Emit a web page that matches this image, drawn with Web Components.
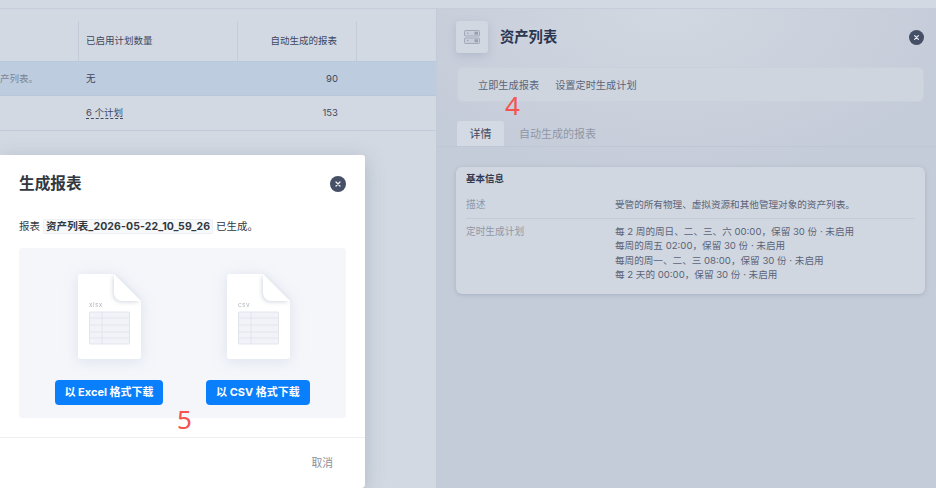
<!doctype html>
<html lang="zh">
<head>
<meta charset="utf-8">
<title>资产列表</title>
<style>
  html, body { margin: 0; height: 100%; overflow: hidden; }
  body {
    position: relative;
    width: 936px;
    height: 488px;
    background: #d3d9e2;
    color: #3d4760;
    font: 9.5px/14px Inter, "Noto Sans CJK SC", sans-serif;
  }
  .main { display: flex; height: 480px; border-top: 1px solid #c6cedc; margin-top: 8px; box-sizing: border-box; }
</style>
</head>
<body>
<div class="main">
  <report-table></report-table>
  <asset-panel></asset-panel>
</div>
<report-modal></report-modal>
<step-mark style="left:505px;top:95px">4</step-mark>
<step-mark style="left:177px;top:409px">5</step-mark>

<script>
const closeButton = size => `
  <svg width="${size}" height="${size}" viewBox="0 0 16 16">
    <circle cx="8" cy="8" r="8" fill="#454f65"/>
    <path d="M6 6l4 4M10 6l-4 4" stroke="#eef0f4" stroke-width="1.3" stroke-linecap="round"/>
  </svg>`

class ReportTable extends HTMLElement {
  constructor() {
    super()
    this.attachShadow({mode: 'open'}).innerHTML = `
      <style>
        :host { display: block; width: 437px; flex: none; box-sizing: border-box; padding-top: 12px; border-right: 1px solid #c3cbda; }
        .row { display: grid; grid-template-columns: 79px 159px 119px 1fr; align-items: center; border-bottom: 1px solid #c0cbdc; }
        .head { height: 41px; border-bottom: 1px solid #b7c8dd; box-sizing: border-box; }
        .head > div { height: 100%; display: flex; align-items: center; border-right: 1px solid #c5ccd9; box-sizing: border-box; }
        .head > div:last-child { border: 0; }
        .r1 { height: 34px; background: #bdcddf; box-sizing: border-box; border-bottom-color: #b7c8dd; }
        .r2 { height: 35px; box-sizing: border-box; }
        .cell { padding-left: 7px; }
        .num { padding: 0 19px 0 0; text-align: right; justify-content: flex-end; }
        .clip { color: #7d8595; white-space: nowrap; display: flex; justify-content: flex-end; overflow: hidden; padding-right: 41px; }
        .plans { border-bottom: 1px dashed #3f4a60; }
      </style>
      <div class="row head">
        <div></div><div class="cell">已启用计划数量</div><div class="num">自动生成的报表</div><div></div>
      </div>
      <div class="row r1">
        <div class="clip"><span>资产列表。</span></div><div class="cell">无</div><div class="num">90</div><div></div>
      </div>
      <div class="row r2">
        <div></div><div class="cell"><span class="plans">6 个计划</span></div><div class="num">153</div><div></div>
      </div>`
  }
}
customElements.define('report-table', ReportTable)

class AssetPanel extends HTMLElement {
  constructor() {
    super()
    this.attachShadow({mode: 'open'}).innerHTML = `
      <style>
        :host {
          display: block; flex: 1; box-sizing: border-box; padding: 12px 11px 0 19px;
          background: radial-gradient(ellipse 300px 170px at 230px 0, #d2d8e1, #c5ccd9);
        }
        .top { display: flex; align-items: center; height: 32px; }
        .logo {
          width: 32px; height: 32px; border-radius: 3px; background: #d2d8e1;
          box-shadow: 0 3px 8px rgba(100,115,145,.22);
          display: flex; align-items: center; justify-content: center;
        }
        h1 { margin: 0 0 0 12px; font-size: 14.3px; font-weight: 700; color: #2a3550; flex: 1; }
        .close { display: flex; margin-right: 1px; }
        .actions {
          display: flex; gap: 16px; align-items: center; height: 35px; box-sizing: border-box;
          margin: 14px 1px 0 1px; padding-left: 21px; border-radius: 6px;
          background: #ced5df; box-shadow: inset 0 0 0 1px #c9d1dd; color: #5a647a; font-size: 10.2px;
        }
        .tabs { display: flex; margin-top: 19px; margin-left: -19px; margin-right: -11px; padding-left: 20px; height: 26px; border-bottom: 1px solid #bfc7d6; box-sizing: border-box; }
        .tab { display: flex; align-items: center; font-size: 11px; }
        .on { width: 47px; justify-content: center; background: #d4dae3; border-radius: 3px 3px 0 0; color: #3d4760; }
        .off { margin-left: 15px; color: #8f97a7; }
        .card {
          margin-top: 20px; height: 127px; box-sizing: border-box; width: 469px;
          padding: 5px 10px 0; border-radius: 6px; background: #d1d7e0;
          box-shadow: 0 1px 4px rgba(110,125,155,.35);
        }
        h2 { margin: 0; font-size: 9.5px; line-height: 14px; font-weight: 700; color: #2f3a52; }
        .field { display: grid; grid-template-columns: 149px 1fr; color: #5a647a; font-size: 9.6px; }
        .field .k { color: #8f97a7; font-size: 9.7px; }
        .d { margin-top: 12px; padding-bottom: 6px; border-bottom: 1px solid #c3ccdb; }
        .s { margin-top: 6px; line-height: 14.3px; }
      </style>
      <div class="top">
        <div class="logo">
          <svg width="16" height="14" viewBox="0 0 16 14" fill="none" stroke="#a2aab8">
            <rect x=".5" y=".5" width="15" height="5.5" rx=".8" fill="#c8cfda"/>
            <rect x=".5" y="8" width="15" height="5.5" rx=".8" fill="#c8cfda"/>
            <path d="M10.5 3.2h3.5M10.5 10.7h3.5" stroke="#98a0af" stroke-width="3"/>
            <path d="M3 3.2h1.5M3 10.7h1.5" stroke="#98a0af"/>
          </svg>
        </div>
        <h1>资产列表</h1>
        <span class="close">${closeButton(15)}</span>
      </div>
      <div class="actions"><span>立即生成报表</span><span>设置定时生成计划</span></div>
      <div class="tabs">
        <span class="tab on">详情</span>
        <span class="tab off">自动生成的报表</span>
      </div>
      <div class="card">
        <h2>基本信息</h2>
        <div class="field d"><span class="k">描述</span><span>受管的所有物理、虚拟资源和其他管理对象的资产列表。</span></div>
        <div class="field s"><span class="k">定时生成计划</span><span>每 2 周的周日、二、三、六 00:00，保留 30 份 · 未启用<br>每周的周五 02:00，保留 30 份 · 未启用<br>每周的周一、二、三 08:00，保留 30 份 · 未启用<br>每 2 天的 00:00，保留 30 份 · 未启用</span></div>
      </div>`
  }
}
customElements.define('asset-panel', AssetPanel)

class FileDownload extends HTMLElement {
  constructor() {
    super()
    const type = this.getAttribute('type')
    this.attachShadow({mode: 'open'}).innerHTML = `
      <style>
        :host { display: flex; flex-direction: column; align-items: center; }
        svg { display: block; overflow: visible; filter: drop-shadow(0 2px 7px rgba(150,165,195,.25)); }
        button {
          margin-top: 21px; height: 25px; padding: 0; border: 0; border-radius: 4px;
          width: var(--button-width); background: #0a7ffb; color: #fff;
          font: 700 11px/25px Inter, "Noto Sans CJK SC", sans-serif;
        }
      </style>
      <svg width="63" height="85" viewBox="0 0 63 85">
        <path d="M3 0H36L63 27V82a3 3 0 0 1-3 3H3a3 3 0 0 1-3-3V3a3 3 0 0 1 3-3z" fill="#fff"/>
        <path d="M36 0L63 27H44a8 8 0 0 1-8-8z" fill="#fff" style="filter:drop-shadow(-1px 1px 2px rgba(130,140,165,.35))"/>
        <text x="11" y="33" font-size="6.5" letter-spacing=".4" fill="#aeb3bc" font-family="Inter, sans-serif">${type}</text>
        <rect x="11.5" y="38" width="40" height="32" rx="1" fill="#f1f3f8" stroke="#e1e5ec"/>
        <path d="M24 38v32M11.5 44h40M11.5 51h40M11.5 58h40M11.5 64h40" stroke="#e1e5ec" fill="none"/>
      </svg>
      <button><slot></slot></button>`
  }
}
customElements.define('file-download', FileDownload)

class ReportModal extends HTMLElement {
  constructor() {
    super()
    this.attachShadow({mode: 'open'}).innerHTML = `
      <style>
        :host {
          position: absolute; left: 0; top: 155px; width: 365px; height: 333px; box-sizing: border-box;
          display: block; background: #fff; border-radius: 0 3px 4px 0; color: #2f3542;
          box-shadow: 0 4px 20px rgba(90,105,135,.3);
        }
        .title { display: flex; align-items: center; justify-content: space-between; padding: 18px 19px 0; height: 22px; }
        h1 { margin: 0; font-size: 15.7px; line-height: 22px; font-weight: 700; color: #33383f; }
        .close { display: flex; }
        p { margin: 23px 0 0; padding-left: 19px; font-size: 10.5px; line-height: 18px; color: #33383f; }
        code {
          font: 700 10.5px/14px Inter, "Noto Sans CJK SC", sans-serif; padding: 1px 3px; margin: 0;
          background: #f6f8fa; border-radius: 2px; box-shadow: inset 0 0 0 1px #edf0f4; letter-spacing: .1px;
        }
        .box {
          margin: 12px 19px 0; height: 170px; box-sizing: border-box; padding-top: 26px;
          display: flex; justify-content: center; gap: 43px;
          background: #f4f6fa; border-radius: 3px;
        }
        .foot {
          margin-top: 19px; height: 51px; border-top: 1px solid #edeff3; box-sizing: border-box;
          display: flex; align-items: center; justify-content: flex-end; padding: 1px 32px 0 0;
          font-size: 10.8px; color: #8a8f9c;
        }
      </style>
      <div class="title"><h1>生成报表</h1><span class="close">${closeButton(16)}</span></div>
      <p>报表 <code>资产列表_2026-05-22_10_59_26</code> 已生成。</p>
      <div class="box">
        <file-download type="xlsx" style="--button-width:108px">以 Excel 格式下载</file-download>
        <file-download type="csv" style="--button-width:104px">以 CSV 格式下载</file-download>
      </div>
      <div class="foot">取消</div>`
  }
}
customElements.define('report-modal', ReportModal)

// red step numbers painted over the capture
class StepMark extends HTMLElement {
  constructor() {
    super()
    this.attachShadow({mode: 'open'}).innerHTML = `
      <style>
        :host { position: absolute; display: block; color: #f4534f; font: 26px/20px "Noto Sans", sans-serif; }
      </style>
      <slot></slot>`
  }
}
customElements.define('step-mark', StepMark)
</script>
</body>
</html>
